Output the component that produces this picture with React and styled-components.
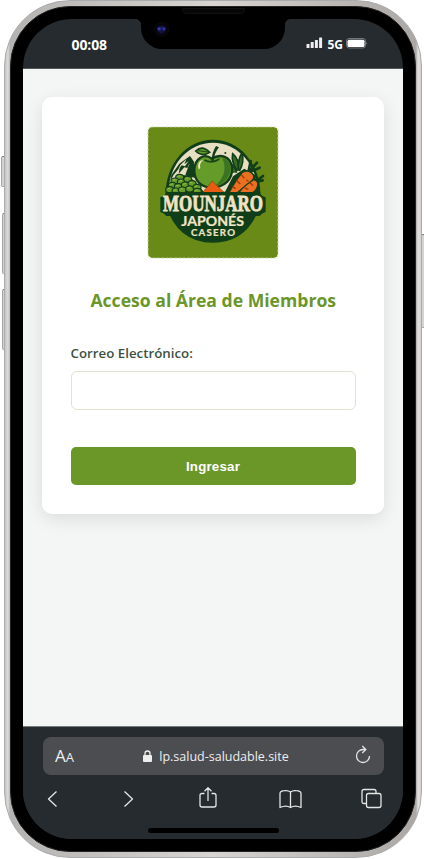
import React from "react";
import styled, { createGlobalStyle } from "styled-components";

const GlobalStyle = createGlobalStyle`
  * { box-sizing: border-box; }
  body { margin: 0; background: #fff; font-family: "Open Sans", "Noto Sans", sans-serif; }
`;

const Stage = styled.main`
  position: relative;
  width: 424px;
  height: 859px;
  padding: 0 2px 1px 4px;
  overflow: hidden;
`;

const SideButton = styled.span`
  position: absolute;
  top: ${(p) => p.$top}px;
  height: ${(p) => p.$height}px;
  ${(p) => (p.$right ? "right: -1px; width: 4px;" : `left: ${p.$left}px; width: 5px;`)}
  border: 1px solid #a3a4a5;
  border-top-color: #777;
  border-radius: 2px;
  background: #d2d3d3;
`;

const Frame = styled.section`
  position: relative;
  width: 418px;
  height: 858px;
  padding: 5px;
  border: 1px solid #aaabac;
  border-radius: 66px;
  background: linear-gradient(90deg, #c4c4c4, #dedcd9 3px, #b5b3b1 5px, #d7d4d1 50%, #aaa7a4 calc(100% - 5px), #e4e2df calc(100% - 3px), #d2d1d0);
`;

const Bezel = styled.div`
  position: relative;
  height: 846px;
  padding: 12px 13px 14px 12px;
  border: 1px solid #242424;
  border-radius: 60px;
  background: #000;
`;

const Screen = styled.div`
  position: relative;
  display: flex;
  flex-direction: column;
  width: 380px;
  height: 820px;
  border-radius: 49px;
  overflow: hidden;
  background: #262b2f;
`;

const StatusBar = styled.header`
  display: flex;
  justify-content: space-between;
  flex: none;
  height: 50px;
  padding: 17px 35px 0 48.5px;
  border-bottom: 1px solid #53585b;
  color: #fff;
`;

const Time = styled.time`
  font-size: 14px;
  line-height: 18px;
  font-weight: 700;
  letter-spacing: -0.1px;
`;

const Signals = styled.div`
  display: flex;
  align-items: flex-start;
  font-size: 12px;
  line-height: 18px;
  font-weight: 700;
`;

const SignalIcon = styled.svg`
  width: 17px;
  height: 12px;
  margin: 0 4px 0 0;
`;

const BatteryIcon = styled.svg`
  width: 22px;
  height: 11px;
  margin: 2px 0 0 3px;
`;

const Notch = styled.div`
  position: absolute;
  top: 0;
  left: 118px;
  width: 144px;
  height: 30px;
  border-radius: 0 0 21px 21px;
  background: #000;
  &::before, &::after {
    content: "";
    position: absolute;
    top: 0;
    width: 5px;
    height: 5px;
  }
  &::before { left: -5px; background: radial-gradient(circle at 0 100%, transparent 4.5px, #000 5px); }
  &::after { right: -5px; background: radial-gradient(circle at 100% 100%, transparent 4.5px, #000 5px); }
`;

const Camera = styled.span`
  position: absolute;
  left: 148px;
  top: 20px;
  width: 17px;
  height: 17px;
  border-radius: 50%;
  background:
    radial-gradient(ellipse at 36% 46%, #3538a0 0 1px, transparent 2.5px),
    radial-gradient(ellipse at 64% 46%, #2c309a 0 1px, transparent 2.5px),
    radial-gradient(circle, #12133e 0 3px, #05040b 5px, #0b070b 7px, #000 8px);
`;

const Speaker = styled.span`
  position: absolute;
  left: 177px;
  top: 7px;
  width: 63px;
  height: 6px;
  border: 1px solid #111;
  border-radius: 0 0 4px 4px;
  background: #060606;
`;

const Page = styled.div`
  flex: 1;
  padding: 28px 19px;
  background: #f4f6f6;
`;

const Card = styled.section`
  height: 417px;
  padding: 29px 28px 0 28.5px;
  border-radius: 10px;
  background: #fff;
  box-shadow: 0 5px 18px rgba(0, 0, 0, 0.1);
`;

const Logo = styled.svg`
  display: block;
  width: 132px;
  height: 133px;
  margin: 0 auto;
`;

const Title = styled.h1`
  margin: 28px 0 0;
  color: #6b9628;
  font-size: 17.6px;
  line-height: 26px;
  font-weight: 700;
  text-align: center;
  white-space: nowrap;
`;

const Label = styled.label`
  display: block;
  margin-top: 30px;
  color: #3d5142;
  font-size: 13.3px;
  line-height: 20px;
  font-weight: 600;
`;

const Input = styled.input`
  display: block;
  width: 285px;
  height: 39px;
  margin-top: 8px;
  padding: 0 10px;
  border: 1.5px solid #dfe4cf;
  border-radius: 6px;
  outline: none;
  background: #fff;
`;

const Submit = styled.button`
  display: block;
  width: 285px;
  height: 38px;
  margin-top: 37px;
  padding: 0;
  border: 0;
  border-radius: 5px;
  background: #6b9628;
  color: #fff;
  font: 700 13.3px "Liberation Sans", Arial, sans-serif;
  letter-spacing: 0.2px;
`;

const BrowserBar = styled.footer`
  flex: none;
  height: 113px;
  padding: 10px 19px 0 20px;
  border-top: 1px solid #777b7d;
  background: #262b2f;
  color: #eee;
`;

const AddressBar = styled.div`
  display: grid;
  grid-template-columns: 56px 1fr 56px;
  align-items: center;
  height: 38px;
  border-radius: 8px;
  background: #4b4d51;
`;

const TextSize = styled.span`
  padding: 1px 0 0 12px;
  font-size: 17px;
  line-height: 24px;
  small { font-size: 13px; }
`;

const Address = styled.span`
  display: flex;
  align-items: center;
  justify-content: center;
  gap: 7px;
  padding: 0 0 0 5px;
  font-size: 12.5px;
  white-space: nowrap;
`;

const LockIcon = styled.svg`
  width: 9px;
  height: 12px;
`;

const ReloadIcon = styled.svg`
  justify-self: end;
  width: 16px;
  height: 20px;
  margin: 0 13px 2px 0;
`;

const NavRow = styled.nav`
  display: grid;
  grid-template-columns: 76px 75.5px 80.5px 82px auto;
  align-items: center;
  height: 28px;
  padding-left: 4px;
  margin-top: 10px;
`;

const NavIcon = styled.svg`
  width: ${(p) => p.$width}px;
  height: 24px;
  fill: none;
  stroke: #e4e5e6;
  stroke-width: 1.3;
  stroke-linejoin: round;
`;

const HomeBar = styled.div`
  width: 131px;
  height: 5px;
  margin: 15px auto 0;
  border-radius: 3px;
  background: #000;
`;

const PEAS = [
  [119, 171], [105, 182], [124, 185], [143, 177], [97, 195], [115, 199], [136, 194],
  [156, 190], [89, 208], [108, 212], [127, 209], [149, 206], [171, 201], [172, 213],
];

function BrandLogo() {
  return (
    <Logo viewBox="21 17 396 399" role="img" aria-label="Mounjaro Japonés Casero">
      <rect x="24" y="20" width="390" height="393" rx="13" fill="#698a16" />
      <rect x="23" y="19" width="392" height="395" rx="13" fill="none" stroke="#e9edde" strokeWidth="4" strokeDasharray="9 4" />
      <path d="M77 220A142 162 0 0 1 361 220Z" fill="#103e18" />
      <path d="M76 250Q111 367 219 367Q327 367 362 250Z" fill="#103e18" />
      <path d="M86 214A133 147 0 0 1 352 214Z" fill="#e7dfc2" />
      <path d="M94 164L118 130L133 119L150 107L163 126L159 139L147 132L142 143L133 141L116 160L119 142L101 163L91 182Z" fill="#123e1a" />
      <path d="M147 133L164 131L166 172L145 169L136 164Z" fill="#123e1a" />
      <path d="M121 134L139 117L133 132L146 122L135 138L125 135L113 151Z" fill="#e7dfc2" />
      <path d="M81 215L96 184L115 164L140 165L165 183L192 215Z" fill="#123e1a" />
      <path d="M255 215L279 168L313 145L345 164L356 215Z" fill="#123e1a" />
      <g fill="#396b25" stroke="#123e1a" strokeWidth="5">
        <path d="M291 151Q273 123 278 100Q300 118 295 151" />
        <path d="M295 149Q293 117 306 97Q314 125 298 152" />
        <path d="M279 157Q264 139 264 126Q287 138 290 157" />
      </g>
      <g fill="none" stroke="#123e1a" strokeLinecap="round" strokeWidth="8">
        <path d="M326 151L332 122M329 152L351 127M332 154L359 142M348 183L369 167M349 184L368 180" />
      </g>
      <path d="M215 115C194 98 163 112 163 151C164 183 184 202 217 202C253 200 278 177 276 143C273 107 241 99 215 115Z" fill="#659b29" stroke="#123e1a" strokeWidth="7" />
      <path d="M247 113C276 118 281 157 254 183Q242 195 224 197C248 178 263 150 247 113Z" fill="#3b7423" />
      <path d="M176 147Q169 121 191 118Q177 128 181 144Z" fill="#eee5c6" />
      <path d="M193 119Q216 132 238 116" fill="none" stroke="#184819" strokeWidth="5" />
      <path d="M214 122Q216 96 228 77L237 81Q222 99 221 123" fill="#123e1a" />
      <path d="M167 92Q187 73 209 96Q186 111 167 92Z" fill="#659b29" stroke="#123e1a" strokeWidth="5" />
      <path d="M174 91L203 95" stroke="#174819" strokeWidth="3" />
      <circle cx="256" cy="98" r="3" fill="#123e1a" />
      <g fill="#659b29" stroke="#123e1a" strokeWidth="3.5">
        {PEAS.map(([x, y]) => <ellipse key={`${x}-${y}`} cx={x} cy={y} rx="12" ry="9" />)}
      </g>
      <g fill="none" stroke="#9fbc50" strokeLinecap="round" strokeWidth="3">
        {PEAS.map(([x, y]) => <path key={`${x}-${y}`} d={`M${x - 5} ${y - 3}l5 -1`} />)}
      </g>
      <path d="M187 217L217 182L253 217Z" fill="#e85c12" stroke="#6d4511" strokeWidth="2" />
      <g fill="#ed7020" stroke="#164119" strokeWidth="4">
        <path d="M297 217Q322 178 341 178Q358 182 352 199Q348 212 337 217Z" />
        <path d="M267 217Q288 179 307 156Q327 145 340 164Q346 178 322 191L292 217Z" />
      </g>
      <path d="M304 163L313 174M289 180L301 191M319 179L326 183M277 199L287 205M330 187L339 196M314 203L325 207" stroke="#963b12" strokeWidth="4" />
      <path d="M77 215H361V220Q367 230 377 231V275Q366 278 359 287H79Q73 278 61 275V231Q72 229 77 220Z" fill="#103e18" />
      <g fill="#f0e4c5" fontWeight="700" textAnchor="middle">
        <text x="219" y="273" fontFamily="Liberation Serif" fontSize="68" textLength="300" lengthAdjust="spacingAndGlyphs" stroke="#f0e4c5" strokeWidth="2.5">MOUNJARO</text>
        <text x="218" y="317" fontFamily="Lato" fontSize="37" textLength="188" lengthAdjust="spacingAndGlyphs" stroke="#f0e4c5" strokeWidth=".7">JAPONÉS</text>
        <text x="219" y="348" fontFamily="Lato" fontSize="29" textLength="132" lengthAdjust="spacing" stroke="#f0e4c5" strokeWidth=".7">CASERO</text>
      </g>
    </Logo>
  );
}

export default function App() {
  return (
    <Stage>
      <GlobalStyle />
      <SideButton $top={156} $height={31} $left={1} />
      <SideButton $top={213} $height={61} $left={2} />
      <SideButton $top={289} $height={61} $left={2} />
      <SideButton $top={234} $height={94} $right />
      <Frame>
        <Bezel>
          <Screen>
            <StatusBar>
              <Time>00:08</Time>
              <Signals>
                <SignalIcon viewBox="0 0 17 12" fill="#eee">
                  <rect x="0.5" y="8" width="3" height="4" rx=".5" />
                  <rect x="4.7" y="6" width="3" height="6" rx=".5" />
                  <rect x="8.9" y="4" width="3" height="8" rx=".5" />
                  <rect x="13.1" y="1.5" width="3" height="10.5" rx=".5" />
                </SignalIcon>
                5G
                <BatteryIcon viewBox="0 0 22 11">
                  <rect x=".5" y=".5" width="19" height="9.5" rx="2.5" fill="none" stroke="#737679" />
                  <rect x="1.5" y="1.7" width="17" height="7.3" rx="1.5" fill="#fff" />
                  <path d="M20.5 4Q22 5.2 20.5 7Z" fill="#999" />
                </BatteryIcon>
              </Signals>
            </StatusBar>
            <Page>
              <Card>
                <BrandLogo />
                <Title>Acceso al Área de Miembros</Title>
                <Label htmlFor="email">Correo Electrónico:</Label>
                <Input id="email" type="email" />
                <Submit>Ingresar</Submit>
              </Card>
            </Page>
            <BrowserBar>
              <AddressBar>
                <TextSize>A<small>A</small></TextSize>
                <Address>
                  <LockIcon viewBox="0 0 9 12">
                    <rect y="5" width="9" height="7" rx="1" fill="#eee" />
                    <path d="M2 6V3.5a2.5 2.5 0 0 1 5 0V6" fill="none" stroke="#eee" strokeWidth="1.3" />
                  </LockIcon>
                  lp.salud-saludable.site
                </Address>
                <ReloadIcon viewBox="0 0 16 20" fill="none" stroke="#e4e5e6" strokeWidth="1.3">
                  <path d="M10.5 4.5H8A6.5 6.5 0 1 0 14.5 11M7.3 1L10.8 4.5L7.3 8" />
                </ReloadIcon>
              </AddressBar>
              <NavRow>
                <NavIcon $width={11} viewBox="0 0 11 24"><path d="M9.5 4.5L1.5 12L9.5 19.5" /></NavIcon>
                <NavIcon $width={11} viewBox="0 0 11 24"><path d="M1.5 4.5L9.5 12L1.5 19.5" /></NavIcon>
                <NavIcon $width={18} viewBox="0 0 18 24">
                  <path d="M5.5 6.5H3Q1 6.5 1 8.5V18Q1 20 3 20H15Q17 20 17 18V8.5Q17 6.5 15 6.5H12.5M9 14V0.8M5.5 4.3L9 .8L12.5 4.3" />
                </NavIcon>
                <NavIcon $width={23} viewBox="0 0 23 24">
                  <path d="M11.5 5Q9 3.2 5.8 3.7Q1 4 1 6.5V20.5Q7 17.6 11.5 20.5Q16 17.6 22 20.5V6.5Q22 4 17.2 3.7Q14 3.2 11.5 5V20.5" />
                </NavIcon>
                <NavIcon $width={21} viewBox="0 0 21 24">
                  <path d="M5.5 16.5H3Q1 16.5 1 14.5V4.5Q1 2.5 3 2.5H13Q15 2.5 15 4.5V6.5" />
                  <rect x="5.5" y="6.5" width="14.5" height="14" rx="2" />
                </NavIcon>
              </NavRow>
              <HomeBar />
            </BrowserBar>
            <Notch />
          </Screen>
        </Bezel>
        <Camera />
        <Speaker />
      </Frame>
    </Stage>
  );
}
